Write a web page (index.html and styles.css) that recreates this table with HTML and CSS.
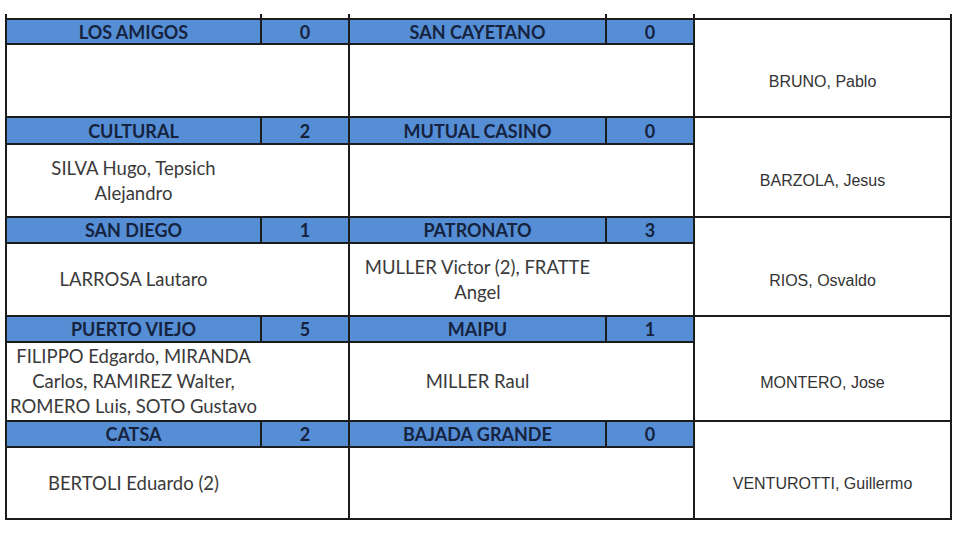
FILE: index.html
```html
<!DOCTYPE html>
<html lang="es">
<head>
<meta charset="utf-8">
<title>Resultados</title>
<link rel="stylesheet" href="styles.css">
</head>
<body>
<div class="sheet">
  <div class="stub first"></div><div class="stub"></div><div class="stub"></div><div class="stub"></div><div class="stub"></div>

  <div class="team first">LOS AMIGOS</div><div class="score">0</div>
  <div class="team">SAN CAYETANO</div><div class="score">0</div>
  <div class="ref">BRUNO, Pablo</div>
  <div class="scorers first"></div>
  <div class="scorers"></div>

  <div class="team first">CULTURAL</div><div class="score">2</div>
  <div class="team">MUTUAL CASINO</div><div class="score">0</div>
  <div class="ref">BARZOLA, Jesus</div>
  <div class="scorers first">SILVA Hugo, Tepsich<br>Alejandro</div>
  <div class="scorers"></div>

  <div class="team first">SAN DIEGO</div><div class="score">1</div>
  <div class="team">PATRONATO</div><div class="score">3</div>
  <div class="ref">RIOS, Osvaldo</div>
  <div class="scorers first">LARROSA Lautaro</div>
  <div class="scorers">MULLER Victor (2), FRATTE<br>Angel</div>

  <div class="team first">PUERTO VIEJO</div><div class="score">5</div>
  <div class="team">MAIPU</div><div class="score">1</div>
  <div class="ref">MONTERO, Jose</div>
  <div class="scorers first">FILIPPO Edgardo, MIRANDA<br>Carlos, RAMIREZ Walter,<br>ROMERO Luis, SOTO Gustavo</div>
  <div class="scorers">MILLER Raul</div>

  <div class="team first">CATSA</div><div class="score">2</div>
  <div class="team">BAJADA GRANDE</div><div class="score">0</div>
  <div class="ref">VENTUROTTI, Guillermo</div>
  <div class="scorers first">BERTOLI Eduardo (2)</div>
  <div class="scorers"></div>
</div>
</body>
</html>
```

FILE: styles.css
```css
html, body {
  margin: 0;
  padding: 0;
  background: #ffffff;
}

.sheet {
  margin: 14px 0 0 5px;
  width: 947px;
  display: grid;
  grid-template-columns: 257px 88px 257px 88px 257px;
  grid-template-rows: 6px 25px 73px 27px 73px 26px 73px 26px 79px 26px 72px;
}

.sheet > div {
  box-sizing: border-box;
  border-right: 2px solid #1c1c1c;
  border-bottom: 2px solid #1c1c1c;
}

.sheet > .first {
  border-left: 2px solid #1c1c1c;
}

.stub {
  background: #ffffff;
}

.team, .score {
  background: #558ed5;
  color: #15233f;
  font-family: "Lato", "Liberation Sans", sans-serif;
  font-weight: 700;
  font-size: 18px;
  display: flex;
  align-items: center;
  justify-content: center;
  line-height: 1;
}

.ref {
  grid-row: span 2;
  display: flex;
  align-items: center;
  justify-content: center;
  padding-top: 28px;
  font-family: "Liberation Sans", Arial, sans-serif;
  font-size: 16px;
  color: #333333;
}

.scorers {
  grid-column: span 2;
  display: flex;
  align-items: center;
  justify-content: center;
  padding-right: 88px;
  text-align: center;
  font-family: "Lato", "Liberation Sans", sans-serif;
  font-size: 18.5px;
  line-height: 25px;
  color: #3a3a3a;
}
```
